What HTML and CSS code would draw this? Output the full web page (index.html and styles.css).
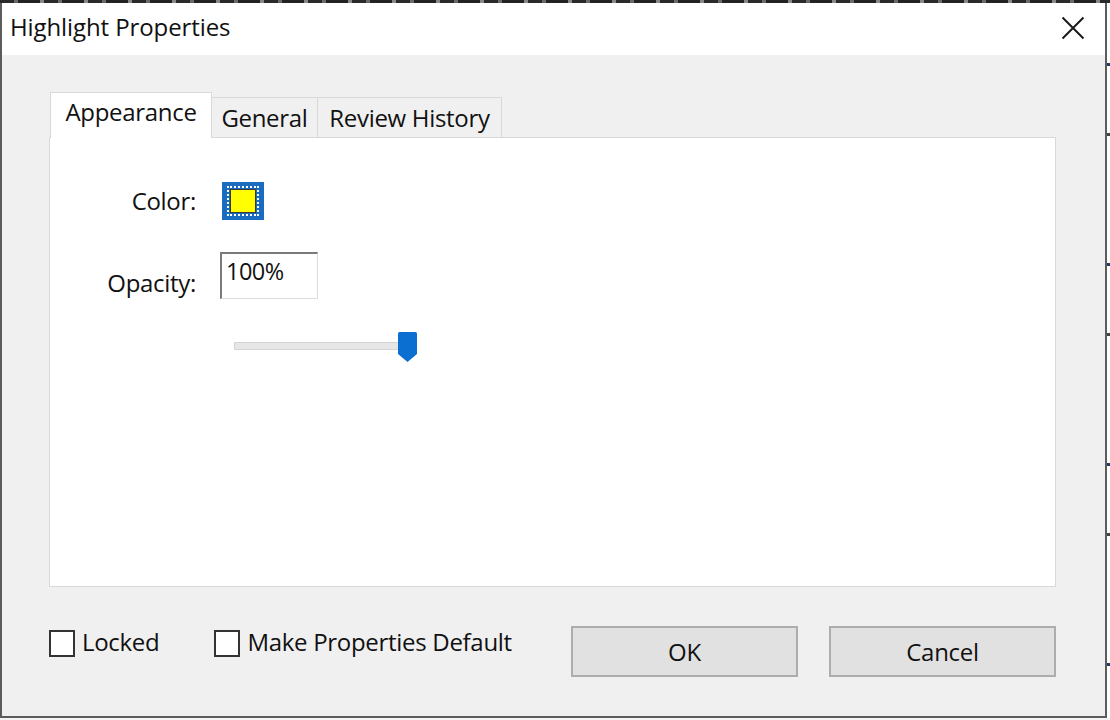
FILE: index.html
```html
<!DOCTYPE html>
<html>
<head>
<meta charset="utf-8">
<title>Highlight Properties</title>
<link rel="stylesheet" href="styles.css">
</head>
<body>
<div class="screen">
  <div class="behind-top"></div>
  <div class="stage">
    <div class="dialog">
      <div class="titlebar">
        <span class="title">Highlight Properties</span>
        <svg class="close" width="24" height="24" viewBox="0 0 24 24">
          <path d="M1.5 1.5 L22.5 22.5 M22.5 1.5 L1.5 22.5" stroke="#1a1a1a" stroke-width="2" fill="none"/>
        </svg>
      </div>
      <div class="client">
        <div class="tabs">
          <div class="tab active">Appearance</div>
          <div class="tab">General</div>
          <div class="tab">Review History</div>
        </div>
        <div class="panel">
          <div class="form">
            <div class="lbl lbl-color">Color:</div>
            <div class="swatch"><div class="swatch-dots"><div class="swatch-fill"></div></div></div>
            <div class="lbl lbl-opacity">Opacity:</div>
            <div class="input">100%</div>
            <div class="slider-cell">
              <div class="slider">
                <div class="track"></div>
                <svg class="thumb" width="19" height="30" viewBox="0 0 19 30">
                  <path d="M1.5 0 H17.5 Q19 0 19 1.5 V22 L9.5 30 L0 22 V1.5 Q0 0 1.5 0 Z" fill="#0a6fd1"/>
                </svg>
              </div>
            </div>
          </div>
        </div>
        <div class="footer">
          <label class="check"><span class="box"></span><span class="check-text">Locked</span></label>
          <label class="check check-2"><span class="box"></span><span class="check-text">Make Properties Default</span></label>
          <div class="buttons">
            <div class="btn">OK</div>
            <div class="btn">Cancel</div>
          </div>
        </div>
      </div>
    </div>
    <div class="behind-right"></div>
  </div>
</div>
</body>
</html>
```
FILE: styles.css
```css
* { box-sizing: border-box; }
html, body {
  margin: 0;
  padding: 0;
  width: 1110px;
  height: 720px;
  overflow: hidden;
  background: #f4f4f4;
  font-family: "Open Sans", "Noto Sans", "Liberation Sans", sans-serif;
  color: #111111;
}
.screen {
  display: flex;
  flex-direction: column;
  width: 1110px;
  height: 720px;
}
.behind-top {
  height: 3px;
  background: repeating-linear-gradient(90deg, #2a2a2a 0 14px, #6a6a6a 14px 18px, #222 18px 40px, #888 40px 44px);
}
.stage {
  display: flex;
  height: 715px;
}
.dialog {
  width: 1107px;
  height: 715px;
  border-left: 2px solid #5c5c5c;
  border-right: 2px solid #5c5c5c;
  border-bottom: 2px solid #5c5c5c;
  display: flex;
  flex-direction: column;
  background: #f0f0f0;
}
.behind-right {
  flex: 1;
  background: repeating-linear-gradient(180deg, #ffffff 0 60px, #1f3f66 60px 63px, #ffffff 63px 130px, #444 130px 133px, #fff 133px 200px);
}
.titlebar {
  height: 52px;
  background: #ffffff;
  display: flex;
  align-items: center;
  justify-content: space-between;
  padding: 0 20px 0 8px;
}
.title {
  font-size: 24px;
  letter-spacing: -0.1px;
  margin-top: -5px;
}
.close { display: block; margin-top: -3px; }
.client {
  flex: 1;
  padding: 37px 49px 0 47px;
  display: flex;
  flex-direction: column;
}
.tabs {
  display: flex;
  align-items: flex-end;
  height: 45px;
  padding-left: 1px;
  position: relative;
  z-index: 1;
}
.tab {
  height: 40px;
  border: 1px solid #d9d9d9;
  border-bottom: none;
  border-left: none;
  background: #f0f0f0;
  font-size: 24px;
  display: flex;
  align-items: center;
  justify-content: center;
  letter-spacing: -0.3px;
}
.tab:nth-child(2) { width: 106px; padding-top: 0; }
.tab:nth-child(3) { width: 184px; padding-top: 0; }
.tab.active {
  width: 162px;
  height: 46px;
  margin-bottom: -1px;
  background: #ffffff;
  border-left: 1px solid #d9d9d9;
  padding-bottom: 8px;
}
.panel {
  height: 450px;
  background: #ffffff;
  border: 1px solid #d9d9d9;
  padding: 44px 0 0 0;
}
.form {
  display: grid;
  grid-template-columns: 146px auto;
  column-gap: 24px;
  row-gap: 32px;
  justify-content: start;
  align-items: center;
}
.lbl {
  text-align: right;
  font-size: 24px;
  letter-spacing: -0.3px;
}
.lbl-color { margin-top: -2px; }
.lbl-opacity { align-self: end; margin-bottom: 0; }
.swatch {
  width: 42px;
  height: 38px;
  margin-left: 2px;
  background: #1a6cc0;
  padding: 4px 5px;
}
.swatch-dots {
  width: 100%;
  height: 100%;
  border: 2px dotted #ffffff;
  padding: 1px;
}
.swatch-fill {
  width: 100%;
  height: 100%;
  background: #ffff00;
  border: 1px solid #3a3a3a;
}
.input {
  width: 98px;
  height: 47px;
  border-top: 2px solid #7a7a7a;
  border-left: 2px solid #7a7a7a;
  border-right: 1px solid #dcdcdc;
  border-bottom: 1px solid #dcdcdc;
  background: #ffffff;
  font-size: 23.5px;
  line-height: 26px;
  padding: 4px 0 0 4px;
  letter-spacing: -0.5px;
}
.slider-cell {
  grid-column: 2;
  margin-top: 1px;
}
.slider {
  position: relative;
  width: 198px;
  height: 30px;
  padding: 10px 0 0 14px;
}
.track {
  width: 171px;
  height: 8px;
  background: #e6e6e6;
  border: 1px solid #d4d4d4;
}
.thumb {
  position: absolute;
  left: 178px;
  top: 0;
}
.footer {
  display: flex;
  align-items: flex-start;
  padding-top: 39px;
  padding-left: 0;
}
.check {
  display: flex;
  align-items: center;
  margin-top: 2px;
  font-size: 24px;
  letter-spacing: -0.3px;
}
.check-2 { margin-left: 55px; }
.box {
  width: 26px;
  height: 27px;
  border: 2px solid #333333;
  background: #ffffff;
  margin-right: 7px;
}
.check-text { margin-top: -3px; }
.buttons {
  margin-left: auto;
  display: flex;
  gap: 31px;
}
.btn {
  width: 227px;
  height: 51px;
  background: #e1e1e1;
  border: 2px solid #adadad;
  display: flex;
  align-items: center;
  justify-content: center;
  font-size: 24px;
  letter-spacing: -0.3px;
}
```
